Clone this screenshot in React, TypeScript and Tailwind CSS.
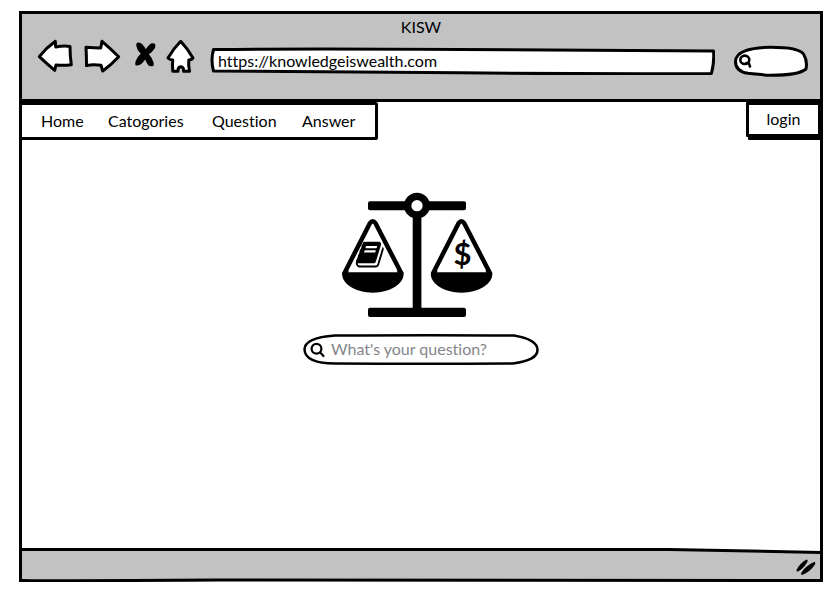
import type { ReactNode } from "react";

const ink = "#000000";

function ToolButton({ label, width, children }: { label: string; width: number; children: ReactNode }) {
  return (
    <button type="button" aria-label={label} className="block shrink-0 cursor-pointer">
      <svg width={width} height="36" viewBox={`0 0 ${width} 36`} fill="white" stroke={ink} strokeWidth="3" strokeLinejoin="round">
        {children}
      </svg>
    </button>
  );
}

function Toolbar() {
  return (
    <div className="flex items-center gap-2">
      <ToolButton label="Back" width={38}>
        <path d="M3.3 17.7 Q10 9 19.3 2.3 L19.7 8 Q28 6.5 34 7.5 Q34 17 35.3 25.7 Q28 26.8 20 26 L18.7 31.3 Q11 25 3.3 17.7Z" />
      </ToolButton>
      <ToolButton label="Forward" width={40}>
        <path d="M4 8.3 Q12 9 18.7 9 L20 2.3 Q29 10 36.7 17.7 Q29 26 20.7 32 L19 26.3 Q11 25 4.5 26.6 Q4.500 17 4 8.3Z" />
      </ToolButton>
      <ToolButton label="Stop" width={27}>
        <path
          fill={ink}
          stroke="none"
          d="M7.300 3.700 C9 3 11 4 12 5 Q14.500 7.500 15.700 10.300 Q18 6.500 20.700 4.700 C22.500 4 24 4.300 25 5 C25.600 6 25.500 7.500 25 9 Q22.500 13 18.900 15.200 Q22.500 19 23.500 23.500 C24 25.500 23.800 26.500 23.200 26.900 C21.500 27.300 20 27.200 18.700 26.700 Q16.500 24 15.200 20.500 Q13 24 9.700 26 C8 26.600 6.500 26.600 5.600 26.200 C5 25 5.200 23.500 5.800 22 Q7.500 17.500 10.700 14.800 Q6.800 11 6.300 6.700 C6.200 5 6.500 4.200 7.300 3.700Z"
        />
      </ToolButton>
      <ToolButton label="Home page" width={31}>
        <path d="M15.700 2.300 Q22 9 28 19 Q26.500 21 23.800 21 Q23.200 26 24.500 32.300 L18.600 32.300 Q18.800 27.800 15.800 27.700 Q12.800 27.800 13 32.300 L7.800 32.300 Q7.200 26 7.700 21 Q5 21 3 19 Q8.500 9.500 15.700 2.300Z" />
      </ToolButton>
    </div>
  );
}

function Outline({ box, d, fill = "#ffffff", stroke = 3 }: { box: string; d: string; fill?: string; stroke?: number }) {
  return (
    <svg aria-hidden="true" className="pointer-events-none absolute inset-0 h-full w-full" viewBox={box} preserveAspectRatio="none">
      <path d={d} fill={fill} stroke={ink} strokeWidth={stroke} strokeLinejoin="round" vectorEffect="non-scaling-stroke" />
    </svg>
  );
}

function BrowserHeader() {
  return (
    <header className="border-[3px] border-black bg-[#c2c2c2] pb-6">
      <h1 className="pt-px text-center text-base leading-6">KISW</h1>
      <div className="flex h-9 items-center pr-3 pl-[14px]">
        <Toolbar />
        <div className="relative mt-2 ml-[14px] h-7 min-w-0 flex-1">
          <Outline box="0 0 505 28" d="M3.500 2.500 Q100 1.500 250 2.500 T503.500 4 Q504.500 14 501.500 26.500 Q380 27 250 25.800 T3.500 24 Q0.500 13 3.500 2.500Z" />
          <input type="text" aria-label="Address" defaultValue="https://knowledgeiswealth.com" className="relative block h-full w-full bg-transparent px-2 pb-0.5 text-base outline-none" />
        </div>
        <div className="relative mt-2 ml-[18px] h-8 w-[75px] shrink-0">
          <Outline box="0 0 75 32" d="M15 28.300 C6 27 2.500 22.500 2.500 16.500 C2.500 6.500 18 2.200 38 2.200 C57 2.200 67 4 70.500 9 C73 13 74 19 73 24 C67 29 50 30.300 38 30.300 C30 30 22 29 15 28.300Z" />
          <svg aria-hidden="true" className="absolute top-2 left-[6px]" width="14" height="17" viewBox="0 0 14 17" fill="none" stroke={ink} strokeWidth="2.600" strokeLinecap="round">
            <ellipse cx="5.800" cy="6.800" rx="4.500" ry="4.200" />
            <path d="M7.500 10 L9.800 10.300 L11 13.500" />
          </svg>
          <input type="search" aria-label="Search the web" className="relative block h-full w-full bg-transparent pr-2 pl-6 outline-none" />
        </div>
      </div>
    </header>
  );
}

const links = ["Home", "Catogories", "Question", "Answer"];

function NavigationRow() {
  return (
    <div className="-mx-[3px] flex items-start justify-between">
      <nav className="grid h-[38px] grid-cols-[43px_80px_66px_54px] items-center gap-6 rounded-[2px] border-[3px] border-black bg-white px-[19px]">
        {links.map((link) => (
          <a key={link} href="#" className="text-base leading-6">{link}</a>
        ))}
      </nav>
      <button type="button" className="mr-[2px] h-[35px] w-[75px] rounded-[1px] border-[3px] border-black bg-white pb-0.5 text-base leading-6 shadow-[2px_3px_0_0_black]">
        login
      </button>
    </div>
  );
}

function Pan() {
  return (
    <>
      <path d="M4.500 83 L30 33 Q32.700 29.500 35.400 33 L61.200 83Z" fill="none" stroke={ink} strokeWidth="4.500" strokeLinejoin="round" />
      <path d="M8 82.500 L32.800 38 L57.700 82.500Z" fill="white" />
      <path d="M2.200 82.500 H63.500 C65 93.500 50 102.700 32.800 102.700 C15.500 102.700 0.700 93.500 2.200 82.500Z" />
    </>
  );
}

function ScalesLogo() {
  return (
    <svg role="img" aria-label="Scales balancing knowledge and wealth" width="162" height="130" viewBox="0 0 162 130" fill={ink}>
      <rect x="28" y="11.300" width="98" height="9" rx="2" />
      <rect x="28" y="117.700" width="98" height="9.300" rx="2" />
      <rect x="72.700" y="20" width="8.700" height="99" />
      <circle cx="77" cy="15.700" r="9.300" fill="white" stroke={ink} strokeWidth="7.300" />
      <Pan />
      <g transform="translate(88.700 0)">
        <Pan />
      </g>
      <g transform="translate(15.800 49.600) scale(0.0168)">
        <path d="M1639 478q40 57 18 129l-275 906q-19 64-76.500 107.500t-122.500 43.500h-923q-77 0-148.500-53.500t-99.500-131.500q-24-67-2-127 0-4 3-27t4-37q1-8-3-21.500t-3-19.500q2-11 8-21t16.500-23.500 16.500-23.500q23-38 45-91.500t30-91.500q3-10 .5-30t-.5-28q3-11 17-28t17-23q21-36 42-92t25-90q1-9-2.500-32t.5-28q4-13 22-30.500t22-22.500q19-26 42.500-84.500t27.500-96.500q1-8-3-25.500t-2-26.500q2-8 9-18t18-23 17-21q8-12 16.500-30.500t15-35 16-36 19.500-32 26.500-23.500 36-11.500 47.500 5.500l-1 3q38-9 51-9h761q74 0 114 56t18 130l-274 906q-36 119-71.500 153.500t-128.500 34.500h-869q-27 0-38 15-11 16-1 43 24 70 144 70h923q29 0 56-15.500t35-41.500l300-987q7-22 5-57 38 15 59 43zm-1064 2q-4 13 2 22.500t20 9.500h608q13 0 25.500-9.500t16.500-22.500l21-64q4-13-2-22.500t-20-9.500h-608q-13 0-25.500 9.500t-16.500 22.500zm-83 256q-4 13 2 22.500t20 9.500h608q13 0 25.500-9.500t16.500-22.500l21-64q4-13-2-22.500t-20-9.500h-608q-13 0-25.500 9.500t-16.500 22.500z" />
      </g>
      <text x="122.500" y="75" textAnchor="middle" fontSize="31" fontWeight="700">$</text>
    </svg>
  );
}

function QuestionSearch() {
  return (
    <div className="relative mt-[14px] h-[31px] w-[236px]">
      <Outline
        box="0 0 236 31"
        stroke={2.5}
        d="M32 1.500 Q130 1 211 1.500 C226 4 234.500 9 234.500 16 C234.500 23 227 27 210 29.500 Q120 30 32 29.500 C12 29.500 2 25 1.500 15.500 C1.500 8 12 3 32 1.500Z"
      />
      <svg aria-hidden="true" className="absolute top-2 left-[7px]" width="16" height="16" viewBox="0 0 16 16" fill="none" stroke={ink} strokeWidth="2.200" strokeLinecap="round">
        <circle cx="6.500" cy="6.700" r="4.900" />
        <path d="M10.200 10.500 L13.500 14" />
      </svg>
      <input type="search" aria-label="Search for a question" placeholder="What's your question?" className="relative block h-[29px] w-full bg-transparent pr-5 pl-7 text-base outline-none placeholder:text-[#85858a] placeholder:opacity-100" />
    </div>
  );
}

function StatusBar() {
  return (
    <footer className="relative flex h-[34px] items-center justify-end border-x-[3px] border-black pt-1 pr-1">
      <div className="absolute -inset-x-[3px] inset-y-0">
        <Outline box="0 0 804 34" fill="#c2c2c2" d="M1.500 1.500 Q340 2.500 650 1.500 Q720 3 802.500 4.500 L802.500 32.500 Q400 31 200 32 T1.500 32.500Z" />
      </div>
      <svg aria-hidden="true" className="relative" width="20" height="16" viewBox="0 0 20 16">
        <path d="M0.500 11 Q4 4 10.500 0.500 Q12.500 1 11 3.500 Q7 10 2 12.500 Q0 12.500 0.500 11Z M5 14.500 Q9 7 18 3 Q20 3 19 5.500 Q14 13 6.500 15.800 Q4.500 16 5 14.500Z" />
      </svg>
    </footer>
  );
}

export default function App() {
  return (
    <div className="flex min-h-screen flex-col bg-white pt-[11px] pr-[11px] pb-[7px] pl-[19px] font-['Lato',sans-serif] text-black [font-variant-ligatures:none]">
      <BrowserHeader />
      <main className="flex flex-1 flex-col border-x-[3px] border-black">
        <NavigationRow />
        <section className="mt-[50px] flex flex-col items-center">
          <ScalesLogo />
          <QuestionSearch />
        </section>
      </main>
      <StatusBar />
    </div>
  );
}
